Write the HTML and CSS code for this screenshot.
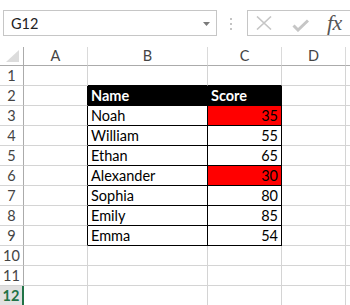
FILE: index.html
```html
<html>
  <head>
    <link rel="stylesheet" href="styles.css">
  </head>
  <body>
    <div class="bar">
      <div class="namebox">
        <span>G12</span>
        <svg class="caret" width="7" height="4" viewBox="0 0 7 4"><path d="M0 0h7L3.5 4z" fill="#7a7a7a"/></svg>
      </div>
      <svg class="dots" width="2" height="12" viewBox="0 0 2 12">
        <rect x="0" y="0" width="2" height="2" fill="#c4c4c4"/>
        <rect x="0" y="5" width="2" height="2" fill="#c4c4c4"/>
        <rect x="0" y="10" width="2" height="2" fill="#c4c4c4"/>
      </svg>
      <div class="fbox">
        <svg class="cancel" width="16" height="14" viewBox="0 0 16 14"><path d="M1 0.5L15 13.5M15 0.5L1 13.5" stroke="#c6c6c6" stroke-width="1.6" fill="none"/></svg>
        <svg class="enter" width="17" height="13" viewBox="0 0 17 13"><path d="M1.5 6.5L6 11L16 1.5" stroke="#c6c6c6" stroke-width="3" fill="none"/></svg>
        <span class="fx">fx</span>
      </div>
    </div>

    <div class="sheet">
      <div class="row head">
        <div class="h corner"><svg width="13" height="12" viewBox="0 0 13 12"><path d="M13 0V12H0z" fill="#dcdcdc"/></svg></div>
        <div class="a">A</div><div class="b">B</div><div class="c">C</div><div class="d">D</div><div class="e"></div>
      </div>
      <div class="row">
        <div class="h">1</div><div class="a"></div><div class="b top"></div><div class="c top"></div><div class="d"></div><div class="e"></div>
      </div>
      <div class="row">
        <div class="h">2</div><div class="a edge"></div><div class="b t th">Name</div><div class="c t th">Score</div><div class="d"></div><div class="e"></div>
      </div>
      <div class="row">
        <div class="h">3</div><div class="a edge"></div><div class="b t">Noah</div><div class="c t num low">35</div><div class="d"></div><div class="e"></div>
      </div>
      <div class="row">
        <div class="h">4</div><div class="a edge"></div><div class="b t">William</div><div class="c t num">55</div><div class="d"></div><div class="e"></div>
      </div>
      <div class="row">
        <div class="h">5</div><div class="a edge"></div><div class="b t">Ethan</div><div class="c t num">65</div><div class="d"></div><div class="e"></div>
      </div>
      <div class="row">
        <div class="h">6</div><div class="a edge"></div><div class="b t">Alexander</div><div class="c t num low">30</div><div class="d"></div><div class="e"></div>
      </div>
      <div class="row">
        <div class="h">7</div><div class="a edge"></div><div class="b t">Sophia</div><div class="c t num">80</div><div class="d"></div><div class="e"></div>
      </div>
      <div class="row">
        <div class="h">8</div><div class="a edge"></div><div class="b t">Emily</div><div class="c t num">85</div><div class="d"></div><div class="e"></div>
      </div>
      <div class="row">
        <div class="h">9</div><div class="a edge"></div><div class="b t">Emma</div><div class="c t num">54</div><div class="d"></div><div class="e"></div>
      </div>
      <div class="row">
        <div class="h">10</div><div class="a"></div><div class="b"></div><div class="c"></div><div class="d"></div><div class="e"></div>
      </div>
      <div class="row">
        <div class="h">11</div><div class="a"></div><div class="b"></div><div class="c"></div><div class="d"></div><div class="e"></div>
      </div>
      <div class="row">
        <div class="h sel">12</div><div class="a"></div><div class="b"></div><div class="c"></div><div class="d"></div><div class="e"></div>
      </div>
    </div>
  </body>
</html>
```

FILE: styles.css
```css
body{
  margin: 0;
  background: #fff;
  font: 14.5px Lato, "Liberation Sans", sans-serif;
  color: #000;
  overflow: hidden;
}
.bar{
  display: flex;
  align-items: flex-start;
  height: 47px;
  box-sizing: border-box;
  padding: 10px 0 0 3px;
  overflow: hidden;
}
.bar > *{
  flex-shrink: 0;
}
.namebox{
  width: 214px;
  height: 26px;
  box-sizing: border-box;
  border: 1px solid #c6c6c6;
  display: flex;
  align-items: center;
  justify-content: space-between;
  padding: 0 6px 0 7px;
  color: #222;
}
.namebox .caret{
  margin-top: 1px;
}
.dots{
  margin: 8px 0 0 13px;
}
.fbox{
  margin-left: 15px;
  width: 120px;
  height: 26px;
  box-sizing: border-box;
  border: 1px solid #c6c6c6;
  border-right: none;
  display: flex;
  align-items: center;
  padding-left: 8px;
}
.fbox .enter{
  margin: 4px 0 0 20px;
}
.fx{
  margin-left: 18px;
  font: italic 22px "Liberation Serif", serif;
  color: #555;
  letter-spacing: -0.5px;
}

.row{
  display: flex;
  height: 20px;
}
.row > div{
  box-sizing: border-box;
  height: 20px;
  border-right: 1px solid #d4d4d4;
  border-bottom: 1px solid #d4d4d4;
  line-height: 19px;
  white-space: nowrap;
  overflow: hidden;
}
.h{ width: 24px; text-align: center; color: #444; }
.a{ width: 64px; }
.b{ width: 120px; }
.c{ width: 74px; }
.d{ width: 64px; }
.e{ flex: 1; border-right: none !important; }

.row > .h{
  border-right-color: #ababab;
}
.head{
  height: 19px;
}
.head > div{
  height: 19px;
  line-height: 18px;
  text-align: center;
  color: #444;
  border-bottom-color: #ababab;
  border-right-color: #dadada;
}
.corner{
  display: flex;
  align-items: flex-end;
  justify-content: flex-end;
  padding: 0 4px 3px 0;
}
.top{
  border-bottom-color: #000 !important;
}
.edge{
  border-right-color: #000 !important;
}
.t{
  border-right-color: #000 !important;
  border-bottom-color: #000 !important;
  padding: 0 3px;
}
.th{
  background: #000;
  color: #fff;
  font-weight: bold;
}
.num{
  text-align: right;
}
.low{
  background: #ff0000;
}
.row > .sel{
  background: #e1e1e1;
  color: #217346;
  font-weight: bold;
  border-right: 2px solid #217346;
}
```
